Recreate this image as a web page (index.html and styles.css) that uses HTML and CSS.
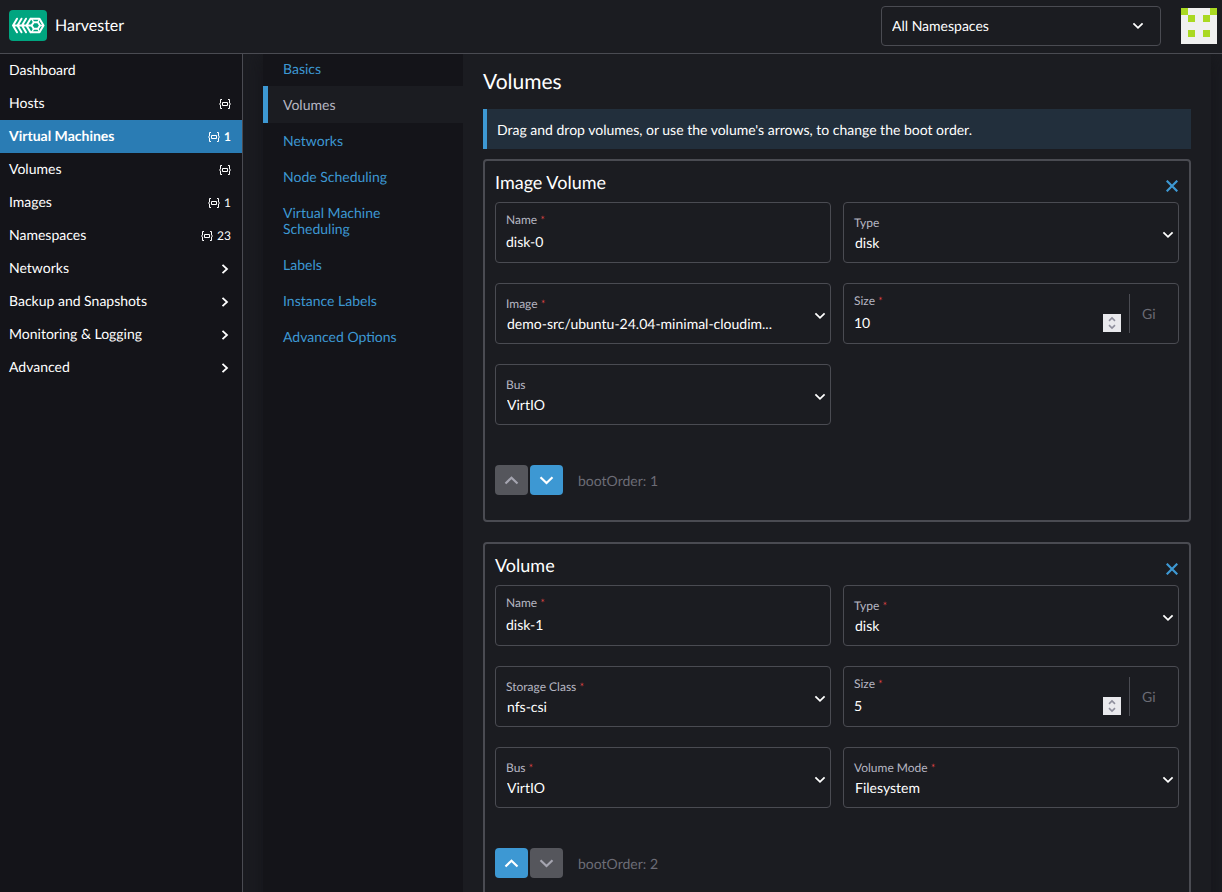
FILE: index.html
```html
<!DOCTYPE html>
<html lang="en">
<head>
    <meta charset="UTF-8">
    <title>Harvester</title>
    <link rel="stylesheet" href="styles.css">
</head>
<body>
<header class="top-bar">
    <svg class="logo" viewBox="0 0 38 31" aria-hidden="true">
        <rect width="38" height="31" rx="4" fill="#00a580"/>
        <g fill="none" stroke="#fff" stroke-width="2" stroke-linejoin="round" stroke-linecap="round">
            <path d="M4 15.5H22M8 8.7L4 15.5L8 22.3M12.5 8.7L8.5 15.5L12.5 22.3M17 8.7L13 15.5L17 22.3M21.5 8.7L17.5 15.5L21.5 22.3"/>
            <path d="M22 8.7H30.5L34.5 15.5L30.5 22.3H22"/>
            <path d="M24.7 12.2H28.9L31 15.5L28.9 18.8H24.7L22.6 15.5Z"/>
            <path d="M22.5 8.7L24.7 12.2M30.5 8.7L28.9 12.2M31 15.5H34.5M30.5 22.3L28.9 18.8M22.5 22.3L24.7 18.8" stroke-width="1.4"/>
        </g>
    </svg>
    <span class="product">Harvester</span>
    <select class="namespaces" aria-label="Namespaces">
        <option>All Namespaces</option>
    </select>
    <svg class="avatar" viewBox="0 0 5 5" shape-rendering="crispEdges" aria-hidden="true">
        <rect width="5" height="5" fill="#f0f0f0"/>
        <path fill="#aad922" d="M0 0h1v1h-1zM4 0h1v1h-1zM1 1h1v1h-1zM3 1h1v1h-1zM1 3h1v1h-1zM3 3h1v1h-1z"/>
    </svg>
</header>

<!-- shared icons -->
<svg class="sprite" aria-hidden="true">
    <symbol id="i-ns" viewBox="0 0 12 12">
        <g fill="none" stroke="currentColor">
            <path d="M3 1.5H1.5V5L.5 6L1.5 7V10.5H3M9 1.5H10.5V5L11.5 6L10.5 7V10.5H9"/>
            <path d="M3.5 4.5H8.5V7.5H3.5Z"/>
        </g>
    </symbol>
    <symbol id="i-right" viewBox="0 0 12 12">
        <path d="M3.5 1.8L8 6L3.5 10.2" fill="none" stroke="currentColor" stroke-width="1.8"/>
    </symbol>
    <symbol id="i-up" viewBox="0 0 16 10">
        <path d="M1.5 8.5L7.5 2.7L13.5 8.5" fill="none" stroke="currentColor" stroke-width="2.2"/>
    </symbol>
    <symbol id="i-down" viewBox="0 0 16 10">
        <path d="M1.5 2.2L7.5 8L13.5 2.2" fill="none" stroke="currentColor" stroke-width="2.2"/>
    </symbol>
    <symbol id="i-close" viewBox="0 0 12 12">
        <path d="M.7 .7L11.3 11.3M11.3 .7L.7 11.3" fill="none" stroke="currentColor" stroke-width="2.2"/>
    </symbol>
    <symbol id="i-spin" viewBox="0 0 18 18">
        <path d="M6 6.8L9 3.9L12 6.8M6 11.2L9 14.1L12 11.2" fill="none" stroke="#8f8f9d" stroke-width="1.6"/>
    </symbol>
</svg>

<div class="layout">
    <nav class="side-nav">
        <a href="#">Dashboard</a>
        <a href="#">Hosts <span class="count"><svg><use href="#i-ns"/></svg></span></a>
        <a href="#" class="active">Virtual Machines <span class="count"><svg><use href="#i-ns"/></svg>1</span></a>
        <a href="#">Volumes <span class="count"><svg><use href="#i-ns"/></svg></span></a>
        <a href="#">Images <span class="count"><svg><use href="#i-ns"/></svg>1</span></a>
        <a href="#">Namespaces <span class="count"><svg><use href="#i-ns"/></svg>23</span></a>
        <a href="#">Networks <span class="count"><svg><use href="#i-right"/></svg></span></a>
        <a href="#">Backup and Snapshots <span class="count"><svg><use href="#i-right"/></svg></span></a>
        <a href="#">Monitoring &amp; Logging <span class="count"><svg><use href="#i-right"/></svg></span></a>
        <a href="#">Advanced <span class="count"><svg><use href="#i-right"/></svg></span></a>
    </nav>

    <main>
        <div class="side-tabs">
            <nav class="tabs">
                <a href="#">Basics</a>
                <a href="#" class="active">Volumes</a>
                <a href="#">Networks</a>
                <a href="#">Node Scheduling</a>
                <a href="#">Virtual Machine Scheduling</a>
                <a href="#">Labels</a>
                <a href="#">Instance Labels</a>
                <a href="#">Advanced Options</a>
            </nav>

            <section class="tab-content">
                <h2>Volumes</h2>
                <div class="banner">Drag and drop volumes, or use the volume's arrows, to change the boot order.</div>

                <div class="volume-box">
                    <div class="volume-title">
                        <h3>Image Volume</h3>
                        <button type="button" class="remove" aria-label="Remove volume"><svg><use href="#i-close"/></svg></button>
                    </div>
                    <div class="fields">
                        <div class="field">
                            <label for="name-0">Name <i>*</i></label>
                            <input type="text" id="name-0" value="disk-0">
                        </div>
                        <div class="field select">
                            <label for="type-0">Type</label>
                            <select id="type-0"><option>disk</option></select>
                        </div>
                        <div class="field select">
                            <label for="image-0">Image <i>*</i></label>
                            <select id="image-0"><option>demo-src/ubuntu-24.04-minimal-cloudim...</option></select>
                        </div>
                        <div class="field unit">
                            <label for="size-0">Size <i>*</i></label>
                            <input type="number" id="size-0" value="10">
                            <svg class="spin"><use href="#i-spin"/></svg>
                            <span class="addon">Gi</span>
                        </div>
                        <div class="field select">
                            <label for="bus-0">Bus</label>
                            <select id="bus-0"><option>VirtIO</option></select>
                        </div>
                    </div>
                    <div class="boot-order">
                        <button type="button" disabled aria-label="Move up"><svg><use href="#i-up"/></svg></button>
                        <button type="button" aria-label="Move down"><svg><use href="#i-down"/></svg></button>
                        <span>bootOrder: 1</span>
                    </div>
                </div>

                <div class="volume-box">
                    <div class="volume-title">
                        <h3>Volume</h3>
                        <button type="button" class="remove" aria-label="Remove volume"><svg><use href="#i-close"/></svg></button>
                    </div>
                    <div class="fields">
                        <div class="field">
                            <label for="name-1">Name <i>*</i></label>
                            <input type="text" id="name-1" value="disk-1">
                        </div>
                        <div class="field select">
                            <label for="type-1">Type <i>*</i></label>
                            <select id="type-1"><option>disk</option></select>
                        </div>
                        <div class="field select">
                            <label for="class-1">Storage Class <i>*</i></label>
                            <select id="class-1"><option>nfs-csi</option></select>
                        </div>
                        <div class="field unit">
                            <label for="size-1">Size <i>*</i></label>
                            <input type="number" id="size-1" value="5">
                            <svg class="spin"><use href="#i-spin"/></svg>
                            <span class="addon">Gi</span>
                        </div>
                        <div class="field select">
                            <label for="bus-1">Bus <i>*</i></label>
                            <select id="bus-1"><option>VirtIO</option></select>
                        </div>
                        <div class="field select">
                            <label for="mode-1">Volume Mode <i>*</i></label>
                            <select id="mode-1"><option>Filesystem</option></select>
                        </div>
                    </div>
                    <div class="boot-order">
                        <button type="button" aria-label="Move up"><svg><use href="#i-up"/></svg></button>
                        <button type="button" disabled aria-label="Move down"><svg><use href="#i-down"/></svg></button>
                        <span>bootOrder: 2</span>
                    </div>
                </div>
            </section>
        </div>
    </main>
</div>
</body>
</html>
```
FILE: styles.css
```css
:root {
    --body-bg: #1b1c21;
    --nav-bg: #141419;
    --border: #4a4b52;
    --text: #fff;
    --muted: #b6b6c2;
    --faint: #6c6c76;
    --primary: #3d98d3;
    --active: #2a7cb4;
    --chevron: url("data:image/svg+xml,%3Csvg xmlns='http://www.w3.org/2000/svg' width='12' height='8' viewBox='0 0 12 8'%3E%3Cpath d='M1.4 1.4L6 5.8L10.6 1.4' fill='none' stroke='%23fff' stroke-width='1.8'/%3E%3C/svg%3E");
}

* {
    box-sizing: border-box;
}

body {
    margin: 0;
    height: 100vh;
    display: flex;
    flex-direction: column;
    overflow: hidden;
    background: var(--body-bg);
    color: var(--text);
    font-family: Lato, "Liberation Sans", sans-serif;
    font-size: 14px;
    line-height: 16px;
    text-rendering: geometricPrecision;
}

a {
    color: inherit;
    text-decoration: none;
}

h2, h3 {
    margin: 0;
    font-weight: 400;
}

input, select, button {
    margin: 0;
    border: none;
    background: none;
    color: inherit;
    font: inherit;
    text-rendering: inherit;
}

select {
    appearance: none;
    cursor: pointer;
}

.sprite {
    display: none;
}

/* header */
.top-bar {
    display: flex;
    align-items: center;
    flex: none;
    height: 54px;
    padding: 0 5px 2px 9px;
    border-bottom: 1px solid var(--border);
}

.logo {
    width: 38px;
    height: 31px;
}

.product {
    flex: 1;
    padding-left: 8px;
    font-size: 16px;
    line-height: 20px;
}

.namespaces {
    width: 280px;
    height: 40px;
    margin-right: 20px;
    padding: 0 40px 0 10px;
    border: 1px solid var(--border);
    border-radius: 4px;
    background: var(--chevron) no-repeat right 16px center;
}

.avatar {
    width: 36px;
    height: 36px;
}

.layout {
    display: flex;
    flex: 1;
    min-height: 0;
}

/* left navigation */
.side-nav {
    flex: none;
    width: 243px;
    background: var(--nav-bg);
    border-right: 1px solid var(--border);
}

.side-nav a {
    display: flex;
    align-items: center;
    justify-content: space-between;
    height: 33px;
    padding: 0 11px 2px 9px;
}

.side-nav .active {
    background: var(--active);
    font-weight: 700;
}

.count {
    display: flex;
    align-items: center;
    gap: 4px;
    padding-top: 2px;
    font-size: 12px;
}

.count svg {
    width: 12px;
    height: 12px;
}

/* vertical tabs */
main {
    flex: 1;
    min-width: 0;
    overflow: hidden;
    padding: 0 11px 0 20px;
}

.side-tabs {
    display: flex;
    min-height: 100%;
    box-shadow: 0 0 20px #141419;
}

.tabs {
    flex: none;
    width: 200px;
    background: var(--nav-bg);
    color: var(--primary);
}

.tabs a {
    display: block;
    padding: 10px 40px 10px 15px;
    border-left: 5px solid transparent;
}

.tabs a:first-child {
    padding-top: 7px;
    padding-bottom: 9px;
}

.tabs .active {
    padding-top: 11px;
    background: var(--body-bg);
    border-left-color: var(--primary);
    color: var(--muted);
}

.tab-content {
    flex: 1;
    min-width: 0;
    padding: 16px 20px 20px;
}

h2 {
    margin-bottom: 15px;
    font-size: 21px;
    line-height: 24px;
}

.banner {
    margin-bottom: 10px;
    padding: 13px 10px 11px;
    border-left: 4px solid var(--primary);
    background: #222f3c;
}

/* volume */
.volume-box {
    margin-bottom: 20px;
    padding: 0 10px 25px;
    border: 2px solid var(--border);
    border-radius: 4px;
}

.volume-title {
    display: flex;
    justify-content: space-between;
    padding-top: 9px;
    height: 41px;
}

h3 {
    font-size: 18px;
    line-height: 24px;
}

.remove {
    align-self: flex-start;
    margin-top: 9px;
    padding: 1px;
    color: var(--primary);
    cursor: pointer;
}

.remove svg {
    display: block;
    width: 12px;
    height: 12px;
}

.fields {
    display: grid;
    grid-template-columns: 1fr 1fr;
    gap: 20px 12px;
}

/* the label lies over the top of its control, both share one cell */
.field {
    display: grid;
    grid-template-columns: minmax(0, 1fr);
    height: 61px;
    border: 1px solid var(--border);
    border-radius: 4px;
}

.field label,
.field input,
.field select {
    grid-area: 1 / 1;
    outline: none;
}

.field label {
    padding: 9px 10px 0;
    color: var(--muted);
    font-size: 12px;
    pointer-events: none;
}

.field label i {
    color: #e24545;
    font-size: 11px;
    font-style: normal;
}

.field input {
    width: 100%;
    padding: 18px 10px 0;
}

.field.select label {
    padding-top: 12px;
}

.field.select select {
    padding: 20px 40px 0 11px;
    background: var(--chevron) no-repeat right 4px top 28px;
}

.field.unit {
    grid-template-columns: minmax(0, 1fr) 18px 57px;
}

.unit input {
    appearance: textfield;
}

.unit input::-webkit-inner-spin-button {
    display: none;
}

.spin {
    width: 18px;
    height: 18px;
    margin-top: 30px;
    background: #e9e9ed;
}

.addon {
    margin: 10px 0 10px 8px;
    padding: 12px 0 0 12px;
    border-left: 1px solid var(--border);
    color: var(--faint);
}

.boot-order {
    display: flex;
    align-items: center;
    gap: 2px;
    margin-top: 40px;
    color: var(--faint);
}

.boot-order button {
    width: 33px;
    height: 30px;
    padding: 0;
    border-radius: 4px;
    background: var(--primary);
    color: #fff;
}

.boot-order button:disabled {
    background: #55565c;
    color: #a5a5b0;
}

.boot-order svg {
    display: block;
    width: 16px;
    height: 10px;
    margin: 0 auto;
}

.boot-order span {
    padding: 2px 0 0 13px;
}
```
